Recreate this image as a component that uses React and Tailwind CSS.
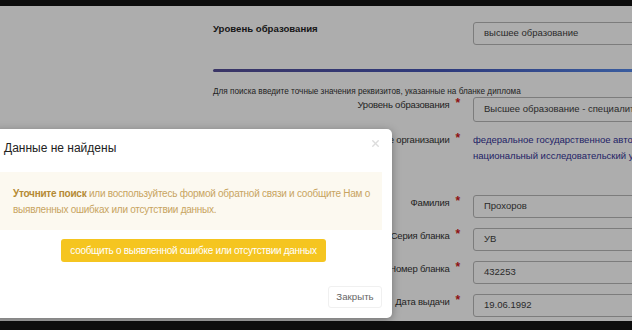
import { X } from "lucide-react";

const fields = [
  { label: "Фамилия", value: "Прохоров" },
  { label: "Серия бланка", value: "УВ" },
  { label: "Номер бланка", value: "432253" },
  { label: "Дата выдачи", value: "19.06.1992" },
];

function Star() {
  return <span className="ml-[6px] text-[12px] font-bold leading-[10px] text-[#8e1212]">*</span>;
}

function Label({ children }) {
  return (
    <div className="w-[260px] shrink-0 flex justify-end items-start pr-[13px] pt-[1px] text-[9.5px] tracking-[-0.2px] leading-[13px] text-[#1e1e1e] whitespace-nowrap">
      {children}
      <Star />
    </div>
  );
}

function Field({ value, h = "h-[23px]" }) {
  return (
    <div className={`w-[200px] shrink-0 ${h} rounded-[3px] border border-[#7c7c7c] pl-[10px] flex items-center text-[9.5px] text-[#2a2a2a] whitespace-nowrap overflow-hidden`}>
      {value}
    </div>
  );
}

export default function App() {
  return (
    <div className="w-[632px] h-[330px] flex flex-col bg-[#0d0d0d] overflow-hidden font-['Liberation_Sans',Arial,sans-serif]">
      <div className="h-[6px] shrink-0" />
      <div className="relative h-[315px] shrink-0 bg-[#adadad] overflow-hidden">
        {/* page behind the dialog */}
        <div className="pl-[213px] w-[860px]">
          <div className="flex items-start mt-[16px]">
            <div className="w-[260px] shrink-0 pt-[1px] text-[9.6px] font-bold leading-[12px] text-[#161616]">
              Уровень образования
            </div>
            <Field value="высшее образование" />
          </div>

          <div className="mt-[24px] h-[3px] w-[460px] rounded-full bg-gradient-to-r from-[#3a3566] via-[#2e3a7c] to-[#3c64a6]" />

          <div className="mt-[15px] text-[8.2px] leading-[10px] text-[#1e1e1e] whitespace-nowrap">
            Для поиска введите точные значения реквизитов, указанные на бланке диплома
          </div>

          <div className="flex items-start">
            <Label>Уровень образования</Label>
            <Field value="Высшее образование - специалитет" h="h-[25px]" />
          </div>

          <div className="flex items-start mt-[10px]">
            <Label>Наименование организации</Label>
            <div className="text-[9.5px] leading-[16px] text-[#1d1d66] whitespace-nowrap">
              <div>федеральное государственное автономное образовательное учреждение</div>
              <div>национальный исследовательский университет</div>
            </div>
          </div>

          <div className="mt-[31px] flex flex-col gap-[10px]">
            {fields.map((f) => (
              <div key={f.label} className="flex items-start">
                <Label>{f.label}</Label>
                <Field value={f.value} />
              </div>
            ))}
          </div>
        </div>

        {/* dialog */}
        <div className="absolute left-[-8px] top-[123px] w-[400px] h-[189px] bg-white rounded-[5px] shadow-[0_2px_8px_rgba(0,0,0,0.35)]">
          <div className="pt-[11px] pl-[12px] text-[12px] leading-[16px] text-[#222]">
            Данные не найдены
          </div>
          <X className="absolute top-[9px] right-[11px] w-[11px] h-[11px] text-[#dcdcdc]" strokeWidth={3} />

          <div className="mt-[16px] ml-[8px] mr-[10px] h-[58px] bg-[#fcf9f0] pt-[14px] pl-[13px] text-[10px] tracking-[-0.25px] leading-[16px] text-[#c8a460] whitespace-nowrap">
            <span className="font-bold text-[#b48a34]">Уточните поиск</span> или воспользуйтесь формой обратной связи и сообщите Нам о
            <br />
            выявленных ошибках или отсутствии данных.
          </div>

          <div className="mt-[9px] ml-[69px] w-[265px] h-[23px] rounded-[3px] bg-[#f5c520] flex items-center justify-center text-[10px] tracking-[-0.3px] text-white whitespace-nowrap">
            сообщить о выявленной ошибке или отсутствии данных
          </div>

          <div className="mt-[24px] flex justify-end pr-[10px]">
            <div className="w-[54px] h-[22px] rounded-[3px] border border-[#f0f0f0] flex items-center justify-center text-[9.7px] text-[#666]">
              Закрыть
            </div>
          </div>
        </div>
      </div>
      <div className="flex-1" />
    </div>
  );
}
